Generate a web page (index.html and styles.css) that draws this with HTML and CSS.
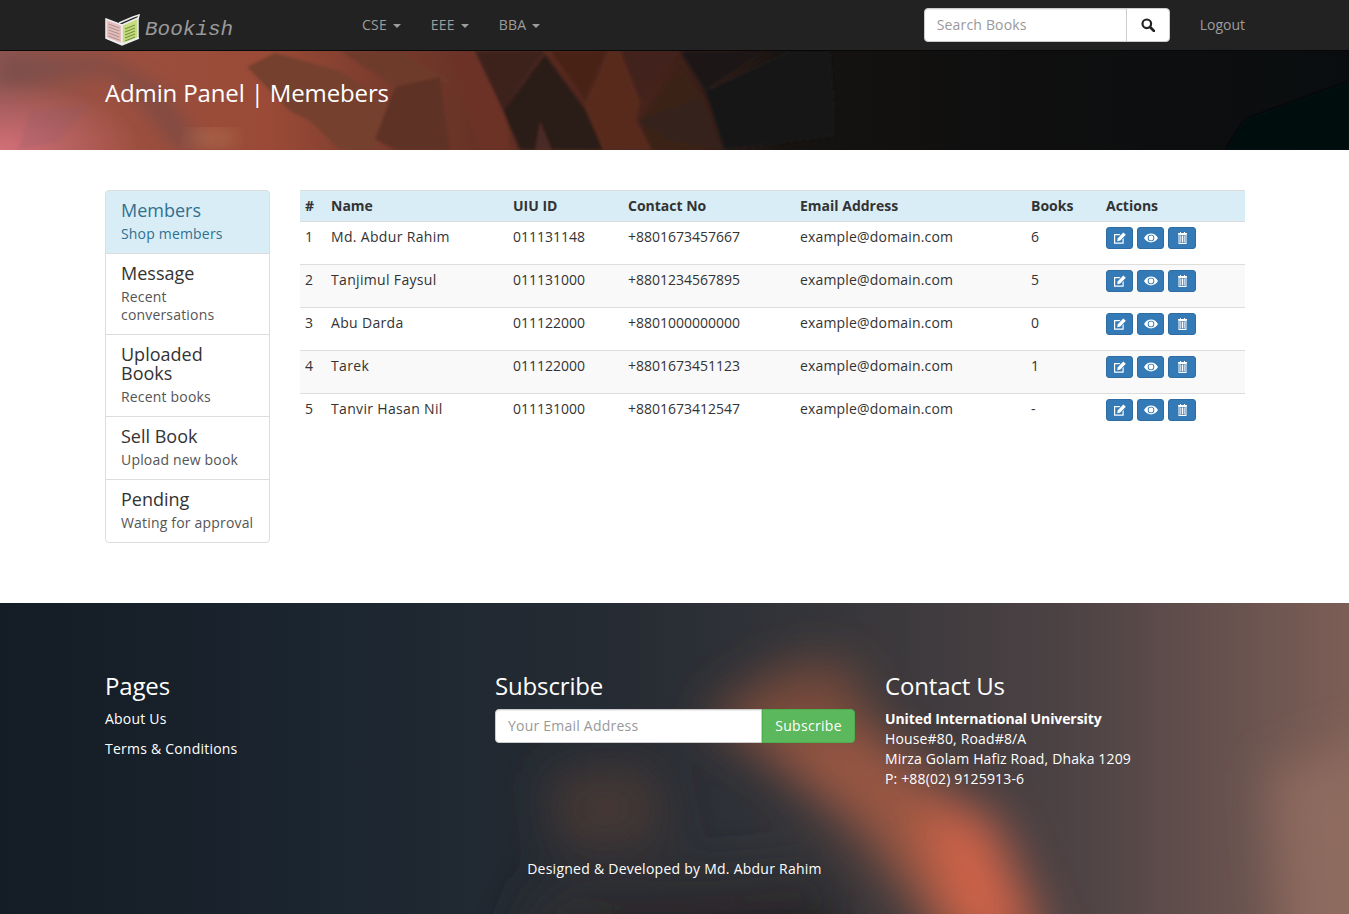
FILE: index.html
```html
<!DOCTYPE html>
<html lang="en">
  <head>
    <meta charset="UTF-8" />
    <meta name="viewport" content="width=device-width, initial-scale=1.0" />
    <title>Bookish | Admin Panel</title>
    <link rel="stylesheet" href="styles.css">
  </head>
  <body>
    <svg class="icon-defs" width="0" height="0">
      <symbol id="icon-edit" viewBox="0 0 12 12">
        <path d="M0 2h6.500L5.300 3.200H1.200v7.300h7.300V7.300L9.700 6v5.700H0z" fill="currentColor" />
        <path d="M3.800 6.300 9.300.6 11.800 2.800 6.300 8.600 3.200 9.300z" fill="currentColor" />
      </symbol>
      <symbol id="icon-eye" viewBox="0 0 14 10">
        <path fill-rule="evenodd" d="M0 5c1.800-2.900 4.200-4.400 7-4.400S12.200 2.100 14 5c-1.800 2.900-4.200 4.400-7 4.400S1.800 7.900 0 5zm7-3.300a3.300 3.300 0 1 0 0 6.600 3.300 3.300 0 0 0 0-6.600z" fill="currentColor" />
        <circle cx="7" cy="5" r="2.400" fill="currentColor" />
      </symbol>
      <symbol id="icon-trash" viewBox="0 0 9 12">
        <path fill-rule="evenodd" d="M2 0h1v1h3V0h1v1h2v1.500H8.500V12h-8V2.500H0V1h2zM1.500 3v8h6V3z" fill="currentColor" />
        <path d="M2.300 3.500h1v7h-1zM4 3.500h1v7H4zM5.700 3.500h1v7h-1z" fill="currentColor" />
      </symbol>
    </svg>

    <nav class="navbar">
      <div class="container navbar-inner">
        <a class="brand" href="#">
          <svg class="brand-logo" width="35" height="32" viewBox="0 0 35 32">
            <path d="M1 5 17 11 17 30 1 24z" fill="#e8bcc0" stroke="#eee" stroke-width="1.500" />
            <path d="M17 11 33 4 33 24 17 30z" fill="#c6dc80" stroke="#eee" stroke-width="1.500" />
            <path d="M3.500 10 14.500 14M3.500 13 14.500 17M3.500 16 14.500 20M3.500 19 14.500 23M3.500 22 14.500 26" stroke="#a98" stroke-width="1.200" />
            <path d="M20 15 30 11M20 18 30 14M20 21 30 17M20 24 30 20M20 27 30 23" stroke="#7c9440" stroke-width="1.200" />
            <path d="M14 9 28 3 34 1 33 5" fill="none" stroke="#eee" stroke-width="1.500" />
            <path d="M1 24 17 31 34 24" fill="none" stroke="#eee" stroke-width="1.500" />
          </svg>
          <span class="brand-name">Bookish</span>
        </a>
        <ul class="nav-links">
          <li><a href="#">CSE <span class="caret"></span></a></li>
          <li><a href="#">EEE <span class="caret"></span></a></li>
          <li><a href="#">BBA <span class="caret"></span></a></li>
        </ul>
        <form class="search-form">
          <input class="search-input" type="text" placeholder="Search Books" />
          <button class="search-button" type="button">
            <svg width="14" height="14" viewBox="0 0 14 14">
              <circle cx="5.800" cy="5.800" r="4.300" fill="none" stroke="#222" stroke-width="2.200" />
              <path d="M9 9l4 4" stroke="#222" stroke-width="2.600" stroke-linecap="round" />
            </svg>
          </button>
        </form>
        <a class="logout" href="#">Logout</a>
      </div>
    </nav>

    <header class="banner">
      <svg class="banner-art" viewBox="0 0 1349 99" preserveAspectRatio="none">
        <defs>
          <linearGradient id="bannerBase" x1="0" x2="1" y1="0" y2="0">
            <stop offset="0" stop-color="#8e5550" />
            <stop offset="0.08" stop-color="#9c5040" />
            <stop offset="0.2" stop-color="#9a4a36" />
            <stop offset="0.3" stop-color="#74392b" />
            <stop offset="0.42" stop-color="#562a20" />
            <stop offset="0.52" stop-color="#3a1f19" />
            <stop offset="0.58" stop-color="#161311" />
            <stop offset="0.75" stop-color="#0f0f0f" />
            <stop offset="1" stop-color="#0a0d0f" />
          </linearGradient>
          <radialGradient id="bannerGlow" cx="0" cy="1" r="1">
            <stop offset="0" stop-color="#d46f78" />
            <stop offset="1" stop-color="#d46f78" stop-opacity="0" />
          </radialGradient>
          <filter id="soft"><feGaussianBlur stdDeviation="1.500" /></filter>
          <filter id="softer"><feGaussianBlur stdDeviation="9" /></filter>
        </defs>
        <rect width="1349" height="99" fill="url(#bannerBase)" />
        <rect x="0" y="30" width="140" height="69" fill="url(#bannerGlow)" />
        <path d="M0 5 110 5 165 40 205 99 175 99 130 40 105 22 25 32 0 34z" fill="#6a4a48" opacity="0.5" filter="url(#softer)" />
        <path d="M30 60 90 54 60 90 18 99z" fill="#8a5c6c" opacity="0.2" filter="url(#soft)" />
        <ellipse cx="212" cy="87" rx="26" ry="9" fill="#c08a68" opacity="0.4" filter="url(#softer)" />
        <g filter="url(#soft)">
          <path d="M247 16 275 2 340 20 395 58 375 99 340 99 310 70 290 60z" fill="#75402f" />
          <path d="M340 0 400 0 450 30 395 36z" fill="#6e3a2a" />
          <path d="M395 36 440 26 450 99 395 99 375 88z" fill="#5e3026" />
          <path d="M450 5 472 0 505 60 510 99 480 99z" fill="#6c3128" />
          <path d="M475 0 545 0 503 60z" fill="#3c241f" />
          <path d="M503 60 545 3 585 58 603 99 520 99z" fill="#2c1b16" />
          <path d="M535 99 540 70 552 99z" fill="#4a2a26" />
          <path d="M550 0 607 0 585 50z" fill="#4a2418" />
          <path d="M608 0 620 0 640 50 636 70 652 99 603 99 585 55z" fill="#592a1e" />
          <path d="M622 0 680 0 640 50z" fill="#42221a" />
          <path d="M640 70 680 16 702 45 722 99 652 99z" fill="#3a2019" />
          <path d="M638 70 700 45 722 99 670 90z" fill="#36201a" />
          <path d="M705 40 790 0 830 0 835 60 835 85 725 99z" fill="#171717" />
          <path d="M680 0 765 0 705 40z" fill="#1a1512" />
          <path d="M1225 99 1245 68 1349 30 1349 99z" fill="#060708" />
        </g>
      </svg>
      <div class="container">
        <h2 class="banner-title">Admin Panel | Memebers</h2>
      </div>
    </header>

    <main class="container main-content">
      <aside class="side-menu">
        <a class="side-item active" href="#">
          <h4>Members</h4>
          <p>Shop members</p>
        </a>
        <a class="side-item" href="#">
          <h4>Message</h4>
          <p>Recent conversations</p>
        </a>
        <a class="side-item" href="#">
          <h4>Uploaded Books</h4>
          <p>Recent books</p>
        </a>
        <a class="side-item" href="#">
          <h4>Sell Book</h4>
          <p>Upload new book</p>
        </a>
        <a class="side-item" href="#">
          <h4>Pending</h4>
          <p>Wating for approval</p>
        </a>
      </aside>

      <section class="members">
        <table class="members-table">
          <colgroup>
            <col class="col-num" />
            <col class="col-name" />
            <col class="col-id" />
            <col class="col-contact" />
            <col class="col-email" />
            <col class="col-books" />
            <col class="col-actions" />
          </colgroup>
          <thead>
            <tr>
              <th>#</th>
              <th>Name</th>
              <th>UIU ID</th>
              <th>Contact No</th>
              <th>Email Address</th>
              <th>Books</th>
              <th>Actions</th>
            </tr>
          </thead>
          <tbody>
            <tr>
              <td>1</td>
              <td class="cell-name">Md. Abdur Rahim</td>
              <td>011131148</td>
              <td>+8801673457667</td>
              <td class="cell-email">example@domain.com</td>
              <td>6</td>
              <td>
                <div class="actions">
                  <a class="btn-action" href="#"><svg width="12" height="12"><use href="#icon-edit" /></svg></a>
                  <a class="btn-action" href="#"><svg width="14" height="10"><use href="#icon-eye" /></svg></a>
                  <a class="btn-action wide" href="#"><svg width="9" height="12"><use href="#icon-trash" /></svg></a>
                </div>
              </td>
            </tr>
            <tr>
              <td>2</td>
              <td class="cell-name">Tanjimul Faysul</td>
              <td>011131000</td>
              <td>+8801234567895</td>
              <td class="cell-email">example@domain.com</td>
              <td>5</td>
              <td>
                <div class="actions">
                  <a class="btn-action" href="#"><svg width="12" height="12"><use href="#icon-edit" /></svg></a>
                  <a class="btn-action" href="#"><svg width="14" height="10"><use href="#icon-eye" /></svg></a>
                  <a class="btn-action wide" href="#"><svg width="9" height="12"><use href="#icon-trash" /></svg></a>
                </div>
              </td>
            </tr>
            <tr>
              <td>3</td>
              <td class="cell-name">Abu Darda</td>
              <td>011122000</td>
              <td>+8801000000000</td>
              <td class="cell-email">example@domain.com</td>
              <td>0</td>
              <td>
                <div class="actions">
                  <a class="btn-action" href="#"><svg width="12" height="12"><use href="#icon-edit" /></svg></a>
                  <a class="btn-action" href="#"><svg width="14" height="10"><use href="#icon-eye" /></svg></a>
                  <a class="btn-action wide" href="#"><svg width="9" height="12"><use href="#icon-trash" /></svg></a>
                </div>
              </td>
            </tr>
            <tr>
              <td>4</td>
              <td class="cell-name">Tarek</td>
              <td>011122000</td>
              <td>+8801673451123</td>
              <td class="cell-email">example@domain.com</td>
              <td>1</td>
              <td>
                <div class="actions">
                  <a class="btn-action" href="#"><svg width="12" height="12"><use href="#icon-edit" /></svg></a>
                  <a class="btn-action" href="#"><svg width="14" height="10"><use href="#icon-eye" /></svg></a>
                  <a class="btn-action wide" href="#"><svg width="9" height="12"><use href="#icon-trash" /></svg></a>
                </div>
              </td>
            </tr>
            <tr>
              <td>5</td>
              <td class="cell-name">Tanvir Hasan Nil</td>
              <td>011131000</td>
              <td>+8801673412547</td>
              <td class="cell-email">example@domain.com</td>
              <td>-</td>
              <td>
                <div class="actions">
                  <a class="btn-action" href="#"><svg width="12" height="12"><use href="#icon-edit" /></svg></a>
                  <a class="btn-action" href="#"><svg width="14" height="10"><use href="#icon-eye" /></svg></a>
                  <a class="btn-action wide" href="#"><svg width="9" height="12"><use href="#icon-trash" /></svg></a>
                </div>
              </td>
            </tr>
          </tbody>
        </table>
      </section>
    </main>

    <footer class="footer">
      <svg class="footer-art" viewBox="0 0 1349 311" preserveAspectRatio="none">
        <defs>
          <linearGradient id="footerBase" x1="0" x2="1" y1="0" y2="0">
            <stop offset="0" stop-color="#141c25" />
            <stop offset="0.25" stop-color="#1c2630" />
            <stop offset="0.45" stop-color="#252b33" />
            <stop offset="0.62" stop-color="#36363a" />
            <stop offset="0.8" stop-color="#4e4345" />
            <stop offset="1" stop-color="#7c5e56" />
          </linearGradient>
          <filter id="blurWide" x="-20%" y="-20%" width="140%" height="140%"><feGaussianBlur stdDeviation="24" /></filter>
        </defs>
        <rect width="1349" height="311" fill="url(#footerBase)" />
        <g filter="url(#blurWide)">
          <path d="M1290 380 1270 170 1420 120 1420 380z" fill="#8e6a5e" />
          <path d="M545 170 650 160 670 240 560 250z" fill="#453834" />
          <path d="M540 280 830 260 860 380 500 380z" fill="#2e2f30" />
          <path d="M790 60 850 60 880 130 760 150 700 115z" fill="#74483a" />
          <path d="M740 130 880 130 1000 230 1050 350 950 350 860 230z" fill="#985642" />
          <path d="M920 200 990 210 1040 340 960 340z" fill="#cf6448" />
          <path d="M600 325 830 315 850 380 580 380z" fill="#1c1918" />
        </g>
      </svg>
      <div class="container footer-columns">
        <div class="footer-col">
          <h3>Pages</h3>
          <ul class="footer-links">
            <li><a href="#">About Us</a></li>
            <li><a href="#">Terms &amp; Conditions</a></li>
          </ul>
        </div>
        <div class="footer-col">
          <h3>Subscribe</h3>
          <form class="subscribe-form">
            <input class="subscribe-input" type="text" placeholder="Your Email Address" />
            <button class="subscribe-button" type="button">Subscribe</button>
          </form>
        </div>
        <div class="footer-col">
          <h3>Contact Us</h3>
          <address class="contact">
            <strong>United International University</strong><br />
            House#80, Road#8/A<br />
            Mirza Golam Hafiz Road, Dhaka 1209<br />
            P: +88(02) 9125913-6
          </address>
        </div>
      </div>
      <p class="credit">Designed &amp; Developed by Md. Abdur Rahim</p>
    </footer>
  </body>
</html>
```

FILE: styles.css
```css
* {
  box-sizing: border-box;
}

body {
  margin: 0;
  font-family: "Open Sans", "Liberation Sans", sans-serif;
  font-size: 14px;
  line-height: 20px;
  letter-spacing: 0.22px;
  color: #333;
  background-color: #fff;
}

a {
  text-decoration: none;
}

ul {
  list-style: none;
  margin: 0;
  padding: 0;
}

.icon-defs {
  position: absolute;
}

.container {
  width: 1170px;
  margin-left: 90px;
  padding: 0 15px;
}

/* navbar */
.navbar {
  height: 51px;
  background-color: #222;
  border-bottom: 1px solid #080808;
}

.navbar-inner {
  display: flex;
  align-items: flex-start;
}

.brand {
  display: flex;
  width: 242px;
  height: 50px;
  padding-top: 14px;
}

.brand-logo {
  flex: none;
}

.brand-name {
  margin: 3px 0 0 5px;
  font-family: "Liberation Mono", monospace;
  font-style: italic;
  font-size: 21px;
  line-height: 26px;
  letter-spacing: 0;
  color: #999;
}

.nav-links {
  display: flex;
}

.nav-links a {
  display: block;
  padding: 15px;
  color: #9d9d9d;
}

.caret {
  display: inline-block;
  width: 0;
  height: 0;
  margin-left: 2px;
  vertical-align: middle;
  border-top: 4px solid;
  border-right: 4px solid transparent;
  border-left: 4px solid transparent;
}

.search-form {
  display: flex;
  width: 246px;
  height: 34px;
  margin: 8px 0 0 auto;
}

.search-input {
  flex: 1;
  min-width: 0;
  height: 34px;
  padding: 5px 12px 7px;
  font: inherit;
  letter-spacing: 0.18px;
  color: #555;
  background-color: #fff;
  border: 1px solid #ccc;
  border-radius: 4px 0 0 4px;
  box-shadow: inset 0 1px 1px rgba(0, 0, 0, 0.075);
}

.search-input::placeholder,
.subscribe-input::placeholder {
  color: #999;
  opacity: 1;
}

.search-button {
  display: flex;
  align-items: center;
  justify-content: center;
  width: 44px;
  height: 34px;
  margin-left: -1px;
  padding: 0;
  background-color: #fff;
  border: 1px solid #ccc;
  border-radius: 0 4px 4px 0;
}

.logout {
  padding: 15px 0;
  margin-left: 30px;
  color: #9d9d9d;
  letter-spacing: 0;
}

/* banner */
.banner {
  position: relative;
  height: 99px;
  overflow: hidden;
  background-color: #111;
}

.banner-art {
  position: absolute;
  top: 0;
  left: 0;
  width: 100%;
  height: 100%;
}

.banner .container {
  position: relative;
}

.banner-title {
  margin: 0;
  padding-top: 25px;
  font-size: 24px;
  font-weight: 400;
  line-height: 33px;
  letter-spacing: -0.14px;
  color: #fff;
}

/* main */
.main-content {
  display: flex;
  align-items: flex-start;
  gap: 30px;
  padding-top: 40px;
  padding-bottom: 60px;
}

.side-menu {
  flex: none;
  width: 165px;
}

.side-item {
  display: block;
  margin-bottom: -1px;
  padding: 10px 15px;
  color: #555;
  background-color: #fff;
  border: 1px solid #ddd;
}

.side-item:first-child {
  border-radius: 4px 4px 0 0;
}

.side-item:last-child {
  margin-bottom: 0;
  border-radius: 0 0 4px 4px;
}

.side-item h4 {
  margin: 0 0 5px;
  font-size: 18px;
  font-weight: 400;
  line-height: 19px;
  letter-spacing: 0;
  color: #333;
}

.side-item p {
  margin: 0;
  line-height: 18px;
  letter-spacing: 0.18px;
}

.side-item.active,
.side-item.active h4 {
  color: #31708f;
  background-color: #d9edf7;
}

.members {
  flex: 1;
  min-width: 0;
}

.members-table {
  width: 100%;
  table-layout: fixed;
  border-collapse: collapse;
  letter-spacing: 0;
}

.col-num { width: 26px; }
.col-name { width: 182px; }
.col-id { width: 115px; }
.col-contact { width: 172px; }
.col-email { width: 231px; }
.col-books { width: 75px; }
.col-actions { width: 144px; }

.members-table th {
  padding: 5px;
  font-weight: 700;
  text-align: left;
  background-color: #d9edf7;
  border-top: 1px solid #ddd;
  border-bottom: 1px solid #ddd;
}

.members-table td {
  padding: 5px;
  vertical-align: top;
  border-bottom: 1px solid #ddd;
}

.members-table .cell-name {
  letter-spacing: 0.33px;
}

.members-table .cell-email {
  letter-spacing: 0.17px;
}

.members-table tbody tr:last-child td {
  border-bottom: 0;
}

.members-table tbody tr:nth-child(even) td {
  background-color: #f9f9f9;
}

.actions {
  display: flex;
  gap: 4px;
  margin-bottom: 10px;
}

.btn-action {
  display: flex;
  align-items: center;
  justify-content: center;
  width: 27px;
  height: 22px;
  color: #fff;
  background-color: #337ab7;
  border: 1px solid #2e6da4;
  border-radius: 3px;
}

.btn-action.wide {
  width: 28px;
}

/* footer */
.footer {
  position: relative;
  height: 311px;
  overflow: hidden;
  color: #fff;
  background-color: #1c2630;
}

.footer-art {
  position: absolute;
  top: 0;
  left: 0;
  width: 100%;
  height: 100%;
}

.footer-columns {
  position: relative;
  display: flex;
  padding-top: 66px;
}

.footer-col {
  width: 390px;
}

.footer-col:last-child {
  width: 360px;
}

.footer-col h3 {
  margin: 0 0 7px;
  font-size: 24px;
  font-weight: 400;
  line-height: 33px;
  letter-spacing: -0.15px;
}

.footer-links li {
  margin-bottom: 10px;
}

.footer-links a {
  color: #fff;
}

.subscribe-form {
  display: flex;
  width: 360px;
  height: 34px;
}

.subscribe-input {
  flex: 1;
  min-width: 0;
  padding: 6px 12px;
  font: inherit;
  letter-spacing: inherit;
  background-color: #fff;
  border: 1px solid #ccc;
  border-radius: 4px 0 0 4px;
  box-shadow: inset 0 1px 1px rgba(0, 0, 0, 0.075);
}

.subscribe-button {
  width: 93px;
  padding: 0;
  font: inherit;
  letter-spacing: 0.3px;
  color: #fff;
  background-color: #5cb85c;
  border: 1px solid #4cae4c;
  border-radius: 0 4px 4px 0;
}

.contact {
  font-style: normal;
  letter-spacing: 0.15px;
}

.contact strong {
  letter-spacing: -0.1px;
}

.credit {
  position: relative;
  margin: 0;
  padding-top: 70px;
  text-align: center;
  letter-spacing: 0.25px;
}
```
